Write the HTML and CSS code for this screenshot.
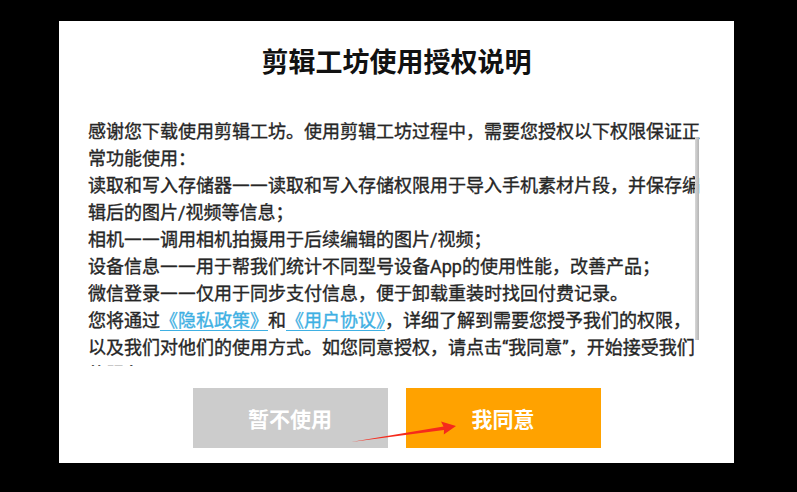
FILE: index.html
```html
<!DOCTYPE html>
<html lang="zh-CN">
<head>
<meta charset="utf-8">
<title>剪辑工坊使用授权说明</title>
<link rel="stylesheet" href="styles.css">
</head>
<body>
<div class="dialog">
  <h1 class="title">剪辑工坊使用授权说明</h1>
  <div class="content">
    <div class="text">
      <p>感谢您下载使用剪辑工坊。使用剪辑工坊过程中，需要您授权以下权限保证正常功能使用：</p>
      <p>读取和写入存储器<span class="dash">—</span><span class="dash">—</span>读取和写入存储权限用于导入手机素材片段，并保存编辑后的图片/视频等信息；</p>
      <p>相机<span class="dash">—</span><span class="dash">—</span>调用相机拍摄用于后续编辑的图片/视频；</p>
      <p>设备信息<span class="dash">—</span><span class="dash">—</span>用于帮我们统计不同型号设备App的使用性能，改善产品；</p>
      <p>微信登录<span class="dash">—</span><span class="dash">—</span>仅用于同步支付信息，便于卸载重装时找回付费记录。</p>
      <p>您将通过<a class="link" href="#">《隐私政策》</a>和<a class="link" href="#">《用户协议》</a>，详细了解到需要您授予我们的权限，以及我们对他们的使用方式。如您同意授权，请点击“我同意”，开始接受我们的服务。</p>
    </div>
    <div class="scrollbar"></div>
  </div>
  <div class="actions">
    <button class="btn btn-cancel">暂不使用</button>
    <button class="btn btn-ok">我同意</button>
  </div>
</div>
<svg class="arrow" width="797" height="492" viewBox="0 0 797 492">
  <polygon points="351,442 443.5,426.6 441,421.6 456,426 443.8,434.5 444,430" fill="#f52a1c"/>
</svg>
</body>
</html>
```
FILE: styles.css
```css
html, body {
  margin: 0;
  padding: 0;
}
body {
  background: #000;
  width: 797px;
  height: 492px;
  position: relative;
  overflow: hidden;
  font-family: Roboto, "Noto Sans CJK SC", sans-serif;
}
.dialog {
  margin: 21px 0 0 59px;
  width: 675px;
  height: 442px;
  box-sizing: border-box;
  background: #fff;
  padding: 22px 0 15px 0;
  display: flex;
  flex-direction: column;
}
.title {
  margin: 0;
  height: 40px;
  line-height: 40px;
  font-size: 27px;
  font-weight: 700;
  color: #111;
  text-align: center;
}
.content {
  position: relative;
  margin: 35px 0 0 29px;
  width: 614px;
  height: 248px;
  flex: none;
  overflow: hidden;
}
.text p {
  margin: 0;
  font-size: 18px;
  line-height: 27px;
  color: #262626;
  font-weight: 400;
  -webkit-text-stroke: 0.35px #262626;
}
.dash {
  display: inline-block;
  width: 18px;
  height: 18px;
  white-space: nowrap;
  font-family: "Noto Sans CJK SC", sans-serif;
  font-size: 20px;
  line-height: 18px;
  vertical-align: 1px;
}
.link {
  color: #3fb0e3;
  -webkit-text-stroke: 0.35px #3fb0e3;
  text-decoration: underline;
  text-decoration-thickness: 1px;
  text-underline-offset: 3px;
}
.scrollbar {
  position: absolute;
  top: 19px;
  right: 3px;
  width: 4px;
  height: 203px;
  background: linear-gradient(to right, #d8d8d8, #b4b4b4);
}
.actions {
  margin-top: 22px;
  display: flex;
  justify-content: center;
  gap: 18px;
}
.btn {
  width: 195px;
  height: 60px;
  border: none;
  border-radius: 0;
  padding: 0;
  font-family: Roboto, "Noto Sans CJK SC", sans-serif;
  font-size: 21px;
  font-weight: 700;
  color: #fff;
}
.btn-cancel {
  background: #cccccc;
}
.btn-ok {
  background: #ffa200;
}
.arrow {
  position: absolute;
  left: 0;
  top: 0;
  pointer-events: none;
}
```
